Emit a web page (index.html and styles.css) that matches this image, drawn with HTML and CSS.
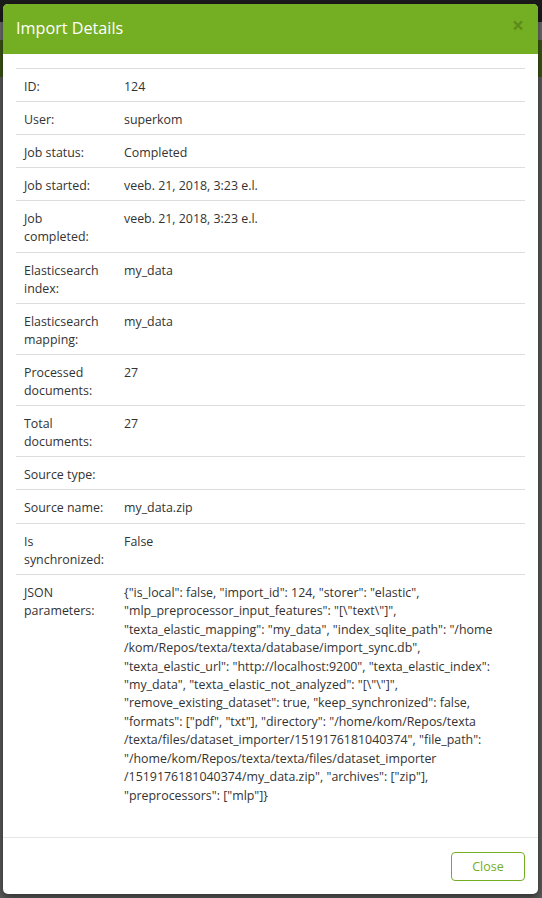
FILE: index.html
```html
<!DOCTYPE html>
<html>
<head>
<meta charset="utf-8">
<link rel="stylesheet" href="styles.css">
</head>
<body>
<div class="page">
  <div class="navbar"></div>
  <div class="subbar"></div>
  <div class="greenbar"></div>
</div>
<div class="modal">
  <div class="modal-header">
    <h4 class="modal-title">Import Details</h4>
    <span class="close">&times;</span>
  </div>
  <div class="modal-body">
    <table class="details">
      <tr><td class="label">ID:</td><td>124</td></tr>
      <tr><td class="label">User:</td><td>superkom</td></tr>
      <tr><td class="label">Job status:</td><td>Completed</td></tr>
      <tr><td class="label">Job started:</td><td>veeb. 21, 2018, 3:23 e.l.</td></tr>
      <tr><td class="label">Job completed:</td><td>veeb. 21, 2018, 3:23 e.l.</td></tr>
      <tr><td class="label">Elasticsearch index:</td><td>my_data</td></tr>
      <tr><td class="label">Elasticsearch mapping:</td><td>my_data</td></tr>
      <tr><td class="label">Processed documents:</td><td>27</td></tr>
      <tr><td class="label">Total documents:</td><td>27</td></tr>
      <tr><td class="label">Source type:</td><td></td></tr>
      <tr><td class="label">Source name:</td><td>my_data.zip</td></tr>
      <tr><td class="label">Is synchronized:</td><td>False</td></tr>
      <tr><td class="label">JSON parameters:</td><td class="json">{"is_local": false, "import_id": 124, "storer": "elastic", "mlp_preprocessor_input_features": "[\"text\"]", "texta_elastic_mapping": "my_data", "index_sqlite_path": "/home<wbr>/kom/Repos/texta/texta/database/import_sync.db", "texta_elastic_url": "http://localhost:9200", "texta_elastic_index": "my_data", "texta_elastic_not_analyzed": "[\"\"]", "remove_existing_dataset": true, "keep_synchronized": false, "formats": ["pdf", "txt"], "directory": "/home/kom/Repos/texta<wbr>/texta/files/dataset_importer/1519176181040374", "file_path": "/home/kom/Repos/texta/texta/files/dataset_importer<wbr>/1519176181040374/my_data.zip", "archives": ["zip"], "preprocessors": ["mlp"]}</td></tr>
    </table>
  </div>
  <div class="modal-footer">
    <button class="btn-close">Close</button>
  </div>
</div>
</body>
</html>
```
FILE: styles.css
```css
* { box-sizing: border-box; }
html, body { margin: 0; padding: 0; }
body {
  background: #5a5a5a;
  font-family: "Open Sans", "Liberation Sans", sans-serif;
  font-size: 12.4px;
  line-height: 18px;
  color: #333;
  height: 898px;
  overflow: hidden;
  position: relative;
}
.page { display: flex; flex-direction: column; }
.navbar { height: 22px; background: #1b1b1b; }
.subbar { height: 18px; background: #6a6a6a; }
.greenbar { height: 37px; background: #3b5415; }

.modal {
  position: absolute;
  top: 4px;
  left: 3px;
  width: 535px;
  background: #fff;
  border-radius: 5px;
  box-shadow: 0 3px 9px rgba(0,0,0,0.5);
  overflow: hidden;
}
.modal-header {
  height: 50px;
  background: #74ae22;
  display: flex;
  align-items: center;
  padding: 0 13px;
  position: relative;
}
.modal-title {
  margin: 0;
  font-weight: 400;
  font-size: 16.2px;
  color: #fff;
  line-height: 1.2;
}
.close {
  position: absolute;
  right: 14px;
  top: 11px;
  font-size: 21px;
  font-weight: 700;
  line-height: 1;
  color: #000;
  opacity: 0.2;
}
.modal-body { padding: 14px 13px 27px; }
.details {
  width: 100%;
  border-collapse: collapse;
}
.details td {
  border-top: 1px solid #ddd;
  padding: 9px 8px 5px;
  vertical-align: top;
  line-height: 18.1px;
}
.details td.label { width: 100px; }
.details td.json { line-height: 18.45px; }
.modal-footer {
  border-top: 1px solid #e5e5e5;
  padding: 14px 13px 13px;
  display: flex;
  justify-content: flex-end;
}
.btn-close {
  width: 74px;
  height: 29px;
  background: #fff;
  border: 1px solid #74ae22;
  border-radius: 4px;
  color: #74ae22;
  font-family: "Open Sans", "Liberation Sans", sans-serif;
  font-size: 12.5px;
  padding: 0;
}
```
